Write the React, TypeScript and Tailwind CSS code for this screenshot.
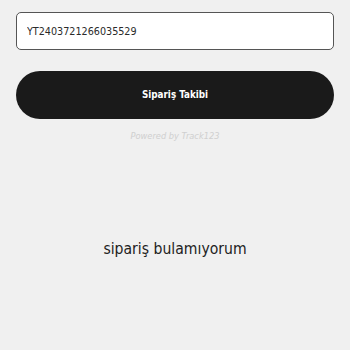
import React, { useState } from "react";

const App = () => {
  const [orderNo, setOrderNo] = useState("YT2403721266035529");

  return (
    <div
      className="w-[350px] h-[350px] bg-[#f0f0f0] px-4 pt-3"
      style={{ fontFamily: '"DejaVu Sans Condensed", "DejaVu Sans", sans-serif' }}
    >
      <input
        type="text"
        value={orderNo}
        onChange={(e) => setOrderNo(e.target.value)}
        className="w-full h-[38px] bg-white border border-[#555] rounded-[5px] px-[10px] text-[10.7px] text-[#2a2a2a] outline-none"
      />

      <button
        type="button"
        className="mt-[21px] w-full h-[48px] rounded-full bg-[#1a1a1a] text-white text-[9.8px] font-bold"
      >
        Sipariş Takibi
      </button>

      <div className="mt-[10px] text-center text-[9.2px] italic text-[#cfcfcf]">
        Powered by Track123
      </div>

      <div className="mt-[95px] text-center text-[15.6px] text-[#222]">
        sipariş bulamıyorum
      </div>
    </div>
  );
};

export default App;
